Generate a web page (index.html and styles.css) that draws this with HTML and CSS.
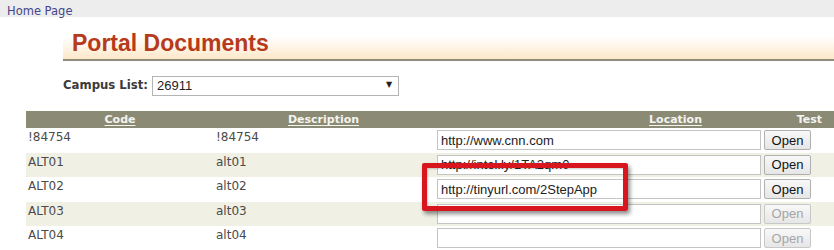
FILE: index.html
```html
<!DOCTYPE html>
<html>
<head>
<meta charset="utf-8">
<link rel="stylesheet" href="styles.css">
</head>
<body>
<div class="topbar"><a class="home" href="#">Home Page</a></div>
<div class="banner"><h1>Portal Documents</h1></div>
<div class="campus">
  <label class="campus-label">Campus List:</label>
  <div class="select-wrap">
    <select class="campus-select"><option>26911</option></select>
    <span class="arrow">&#9660;</span>
  </div>
</div>
<div class="table-wrap">
  <div class="grid head">
    <div class="h h-code"><u>Code</u></div>
    <div class="h h-desc"><u>Description</u></div>
    <div class="h h-loc"><u>Location</u></div>
    <div class="h h-test">Test</div>
  </div>
  <div class="grid row">
    <div class="cell">!84754</div><div class="cell">!84754</div>
    <div class="loc"><input class="url" value="http://www.cnn.com"></div>
    <div class="test"><button class="btn">Open</button></div>
  </div>
  <div class="grid row alt">
    <div class="cell">ALT01</div><div class="cell">alt01</div>
    <div class="loc"><input class="url" value="http://intel.ly/1TA2qm0"></div>
    <div class="test"><button class="btn">Open</button></div>
  </div>
  <div class="grid row">
    <div class="cell">ALT02</div><div class="cell">alt02</div>
    <div class="loc"><input class="url" value="http://tinyurl.com/2StepApp"></div>
    <div class="test"><button class="btn">Open</button></div>
  </div>
  <div class="grid row alt">
    <div class="cell">ALT03</div><div class="cell">alt03</div>
    <div class="loc"><input class="url" value=""></div>
    <div class="test"><button class="btn" disabled>Open</button></div>
  </div>
  <div class="grid row">
    <div class="cell">ALT04</div><div class="cell">alt04</div>
    <div class="loc"><input class="url" value=""></div>
    <div class="test"><button class="btn" disabled>Open</button></div>
  </div>
  <div class="highlight"></div>
</div>
</body>
</html>
```
FILE: styles.css
```css
* { box-sizing: border-box; }
html, body { margin: 0; padding: 0; background: #fff; }
body { font-family: "DejaVu Sans", Verdana, sans-serif; color: #444; overflow: hidden; }

.topbar {
  height: 17px;
  background: #ededed;
  padding-left: 7px;
  display: flex;
  align-items: center;
}
.home {
  font-size: 11.5px;
  color: #45458a;
  text-decoration: none;
  padding-top: 4px;
}

.banner {
  margin: 10px 0 0 63px;
  height: 34px;
  border-bottom: 2px solid #8e8d7b;
  background: linear-gradient(to bottom, #ffffff 0%, #ffffff 30%, #fde8c9 100%);
  display: flex;
  align-items: flex-end;
}
.banner h1 {
  margin: 0 0 3px 9px;
  font-family: "Liberation Sans", Arial, sans-serif;
  font-weight: bold;
  font-size: 23px;
  color: #b63a1b;
  line-height: 26px;
}

.campus {
  margin: 14px 0 0 63px;
  display: flex;
  align-items: center;
  gap: 4px;
  height: 20px;
}
.campus-label {
  font-weight: bold;
  font-size: 11.7px;
  color: #3a3a3a;
}
.select-wrap {
  position: relative;
  width: 247px;
  height: 20px;
}
.campus-select {
  appearance: none;
  -webkit-appearance: none;
  width: 100%;
  height: 20px;
  border: 1px solid #b4b4b4;
  border-radius: 0;
  background: #fff;
  padding: 0 0 0 4px;
  font-family: "Liberation Sans", Arial, sans-serif;
  font-size: 13px;
  color: #222;
}
.arrow {
  position: absolute;
  right: 7px;
  top: 5px;
  font-size: 8px;
  color: #222;
  pointer-events: none;
}

.table-wrap {
  position: relative;
  margin: 16px 0 0 26px;
}
.grid {
  display: grid;
  grid-template-columns: 188px 219px 331px 1fr;
}
.head {
  height: 17px;
  background: #8b8a75;
  align-items: center;
  font-weight: bold;
  font-size: 11px;
  color: #f4f4ee;
}
.h u { text-decoration-thickness: 1px; text-underline-offset: 2px; }
.h-code, .h-desc { text-align: center; }
.h-loc { text-align: right; padding-right: 62px; }
.h-test { text-align: right; padding-right: 12px; }

.row {
  height: 24.5px;
  align-items: center;
}
.alt { background: #f0f0e5; }
.cell {
  font-size: 12px;
  color: #4a4a4a;
  padding-left: 2px;
  align-self: start;
  padding-top: 2px;
}
.loc { padding-left: 4px; display: flex; }
.url {
  width: 324px;
  height: 20px;
  border: 1px solid #c4c4c4;
  border-radius: 0;
  background: #fff;
  padding: 0 3px;
  font-family: "Liberation Sans", Arial, sans-serif;
  font-size: 13px;
  color: #222;
  outline: none;
}
.test { display: flex; }
.btn {
  width: 47px;
  height: 20px;
  padding: 0;
  border: 1px solid #b0b0b0;
  border-radius: 2px;
  background: linear-gradient(to bottom, #f8f8f8, #e6e6e6);
  font-family: "Liberation Sans", Arial, sans-serif;
  font-size: 13px;
  color: #111;
}
.btn:disabled { color: #a6a6a6; border-color: #c8c8c8; }

.highlight {
  position: absolute;
  left: 396px;
  top: 52px;
  width: 206px;
  height: 48px;
  border: 5px solid #d7171d;
  border-radius: 2px;
  box-shadow: 2px 3px 4px rgba(0, 0, 0, 0.45), inset 1px 1px 2px rgba(0,0,0,0.2);
  pointer-events: none;
}
```
